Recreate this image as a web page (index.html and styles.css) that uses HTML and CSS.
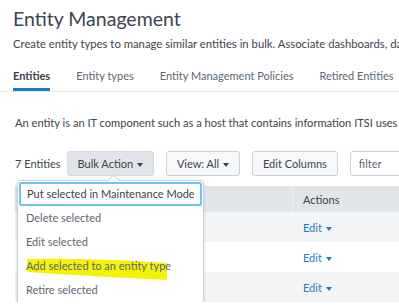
FILE: index.html
```html
<!DOCTYPE html>
<html>
<head>
  <title>Entity Management</title>
  <link rel="stylesheet" href="styles.css">
</head>
<body>
  <div class="page">
    <h1 class="title">Entity Management</h1>
    <p class="subtitle">Create entity types to manage similar entities in bulk. Associate dashboards, data</p>

    <div class="tabs">
      <div class="tab active">Entities</div>
      <div class="tab">Entity types</div>
      <div class="tab">Entity Management Policies</div>
      <div class="tab">Retired Entities</div>
    </div>

    <p class="description">An entity is an IT component such as a host that contains information ITSI uses to</p>

    <div class="toolbar">
      <span class="count">7 Entities</span>
      <button class="button button-active">Bulk Action <span class="caret"></span></button>
      <button class="button">View: All <span class="caret"></span></button>
      <button class="button">Edit Columns</button>
      <input class="filter" type="text" placeholder="filter">
    </div>

    <div class="table-area">
      <div class="table">
        <div class="row header">
          <div class="cell main"></div>
          <div class="cell actions">Actions</div>
        </div>
        <div class="row odd">
          <div class="cell main"></div>
          <div class="cell actions"><span class="link">Edit <span class="caret"></span></span></div>
        </div>
        <div class="row">
          <div class="cell main"></div>
          <div class="cell actions"><span class="link">Edit <span class="caret"></span></span></div>
        </div>
        <div class="row odd">
          <div class="cell main"></div>
          <div class="cell actions"><span class="link">Edit <span class="caret"></span></span></div>
        </div>
      </div>

      <div class="menu">
        <div class="menu-arrow"></div>
        <div class="menu-item focused">Put selected in Maintenance Mode</div>
        <div class="menu-item">Delete selected</div>
        <div class="menu-item">Edit selected</div>
        <div class="menu-item marked">
          <svg class="marker" width="142" height="26" viewBox="0 0 142 26">
            <path d="M0 1 C40 0 100 2 140 5 L140 22 C100 20 40 17 0 14 Z" fill="#f2f20a"/>
          </svg>
          <span class="item-text">Add selected to an entity type</span>
        </div>
        <div class="menu-item">Retire selected</div>
      </div>
    </div>
  </div>
</body>
</html>
```

FILE: styles.css
```css
body {
    margin: 0;
    padding: 0;
    background-color: #fff;
    font-family: 'Lato', 'Open Sans', sans-serif;
    color: #3c444d;
    overflow: hidden;
}

.page {
    padding: 5px 0 0 13px;
    width: 600px;
}

.title {
    font-size: 19.5px;
    font-weight: normal;
    line-height: 28px;
    margin: 0;
    color: #3c444d;
}

.subtitle {
    font-size: 11.3px;
    margin: 3px 0 0 0;
    line-height: 16px;
    white-space: nowrap;
}

.tabs {
    display: flex;
    gap: 26px;
    margin-top: 8px;
    margin-left: -13px;
    padding-left: 13px;
    border-bottom: 1px solid #e6e9ec;
}

.tab {
    flex-shrink: 0;
    white-space: nowrap;
    font-size: 11px;
    line-height: 16px;
    padding: 8px 0 4px 0;
    color: #5c6773;
    border-bottom: 3px solid transparent;
}

.tab.active {
    color: #3c444d;
    font-weight: bold;
    border-bottom-color: #1a7fc1;
}

.description {
    font-size: 11.1px;
    line-height: 16px;
    margin: 23px 0 0 2px;
    white-space: nowrap;
}

.toolbar {
    display: flex;
    align-items: center;
    gap: 12px;
    margin-top: 20px;
    margin-left: 2px;
}

.count {
    font-size: 11px;
    margin-right: -6px;
}

.button {
    font-family: 'Lato', 'Open Sans', sans-serif;
    font-size: 11px;
    height: 25px;
    padding: 0 10px;
    background-color: #f7f8fa;
    color: #3c444d;
    border: 1px solid #c9d0d7;
    border-radius: 3px;
}

.button-active {
    background-color: #e1e5ea;
    border-color: #d3d9df;
}

.caret {
    display: inline-block;
    width: 0;
    height: 0;
    border-left: 3.5px solid transparent;
    border-right: 3.5px solid transparent;
    border-top: 4px solid currentColor;
    vertical-align: middle;
    margin-left: 1px;
}

.filter {
    font-family: 'Lato', 'Open Sans', sans-serif;
    font-size: 11px;
    height: 25px;
    box-sizing: border-box;
    width: 120px;
    padding: 0 8px;
    border: 1px solid #c9d0d7;
    border-radius: 3px;
    color: #3c444d;
}

.filter::placeholder {
    color: #5c6773;
}

.table-area {
    position: relative;
    margin-top: 10px;
    margin-left: 2px;
}

.row {
    display: flex;
    height: 30px;
    align-items: center;
}

.row.header {
    height: 26px;
    background-color: #e1e5ea;
}

.row.odd {
    background-color: #f2f4f5;
}

.cell {
    font-size: 11px;
    height: 100%;
    display: flex;
    align-items: center;
    box-sizing: border-box;
}

.cell.main {
    width: 278px;
}

.header .cell.main {
    border-right: 1px solid #eef0f2;
}

.cell.actions {
    padding-left: 10px;
    width: 200px;
}

.link {
    color: #1a7fc1;
}

.menu {
    position: absolute;
    top: -6px;
    left: 2px;
    width: 187px;
    box-sizing: border-box;
    background-color: #fff;
    border: 1px solid #c9d0d7;
    border-radius: 3px;
    box-shadow: 0 1px 3px rgba(0, 0, 0, 0.15);
    padding: 1px 0 2px 0;
}

.menu-arrow {
    position: absolute;
    top: -5px;
    left: 91px;
    width: 8px;
    height: 8px;
    background-color: #fff;
    border-left: 1px solid #c9d0d7;
    border-top: 1px solid #c9d0d7;
    transform: rotate(45deg);
}

.menu-item {
    position: relative;
    box-sizing: border-box;
    font-size: 11px;
    line-height: 24px;
    height: 24px;
    padding: 0 8px;
    white-space: nowrap;
    color: #5c6773;
}

.menu-item.focused {
    margin: 0 1px;
    padding: 0 6px;
    line-height: 20px;
    color: #3c444d;
    border: 2px solid #6cc5f0;
    border-radius: 2px;
}

.marker {
    position: absolute;
    left: 9px;
    top: 4px;
}

.item-text {
    position: relative;
}
```
